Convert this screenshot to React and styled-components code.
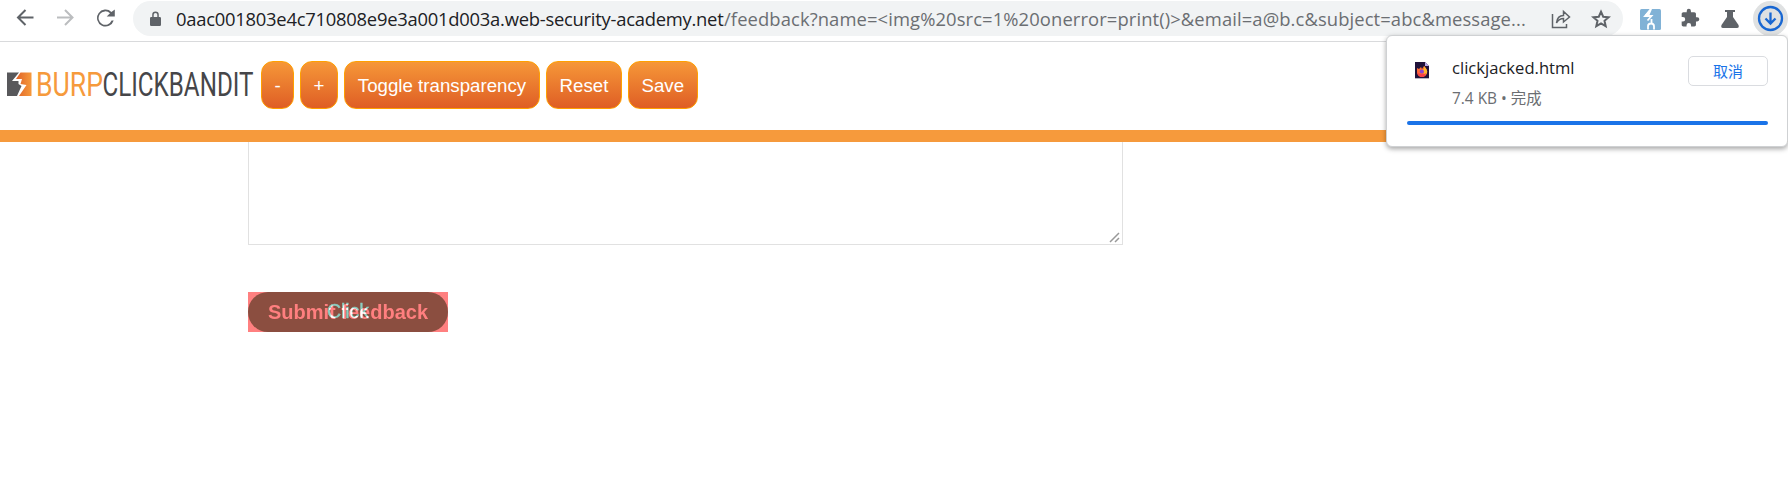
import React from "react";
import styled, { createGlobalStyle } from "styled-components";

const Global = createGlobalStyle`
  * { box-sizing: border-box; }
  body { margin: 0; background: #fff; overflow: hidden; font-family: "Liberation Sans", Arial, sans-serif; }
`;
const Page = styled.div`position: relative; width: 1788px; height: 485px; overflow: hidden;`;
const Toolbar = styled.header`
  display: flex; align-items: flex-start; height: 42px; padding-top: 1px;
  border-bottom: 1px solid #d9dadc; background: #fff;
`;
const Nav = styled.nav`display: flex; gap: 16px; padding: 5px 0 0 13px; width: 133px; flex: none;`;
const Icon = styled.svg`display: block; flex: none; width: ${p => p.$w || 24}px; height: ${p => p.$h || p.$w || 24}px;`;
const Address = styled.div`
  display: flex; align-items: center; flex: none; width: 1490px; height: 35px;
  border-radius: 18px; background: #f1f3f4; padding-left: 14px;
`;
const Url = styled.div`
  display: flex; flex: none; margin-left: 12px; width: 1373px; white-space: pre;
  font: 18.4px/33px "Open Sans", "Noto Sans", sans-serif;
`;
const Host = styled.span`flex: none; width: 548px; color: #202124; letter-spacing: -0.25px;`;
const Path = styled.span`color: #6b6e72; letter-spacing: 0.1px;`;
const AddressActions = styled.div`display: flex; gap: 16px; align-items: center;`;
const Extensions = styled.div`display: flex; align-items: center; gap: 16px; height: 35px; padding-left: 15px;`;
const DownloadCircle = styled.div`
  width: 35px; height: 35px; border-radius: 50%; background: #dfe1e2; margin-left: -5px;
  display: grid; place-items: center; flex: none;
`;
const BanditBar = styled.section`
  display: flex; align-items: flex-start; height: 100px; padding: 19px 0 0 7px;
  border-bottom: 12px solid #f69a3c; background: #fff;
`;
const Brand = styled.div`display: flex; align-items: center; width: 254px; height: 48px;`;
const LogoText = styled.text`font: 400 32.5px "Roboto", sans-serif;`;
const Buttons = styled.div`display: flex; gap: 6px;`;
const BanditButton = styled.button`
  width: ${p => p.$w}px; height: 48px; padding: 2px 0 0; border: 1px solid #ffa000; border-radius: 12px;
  background: linear-gradient(#f69738, #df5e25); color: #fff;
  font: 18.7px "Liberation Sans", Arial, sans-serif;
`;
const Content = styled.main`padding-left: 248px;`;
const Message = styled.div`
  width: 875px; height: 103px; border: 1px solid #e1e1e1; border-top: 0;
  display: flex; justify-content: flex-end; align-items: flex-end; padding: 0 2px 1px 0;
`;
const Submit = styled.div`
  position: relative; width: 200px; height: 40px; margin-top: 47px; background: #ff8080; isolation: isolate;
`;
const Pill = styled.div`
  height: 40px; border-radius: 20px; background: #8b4e40; color: #ff7f7f;
  font: bold 20px/40px "Liberation Sans", Arial, sans-serif; text-align: center;
`;
const ClickLabel = styled.span`
  position: absolute; inset: 0; color: #008080; mix-blend-mode: plus-lighter; text-align: center;
  font: 19.5px/39px "Liberation Sans", Arial, sans-serif; -webkit-text-stroke: 0.4px #008080;
`;
const Popup = styled.aside`
  position: absolute; left: 1386px; top: 35px; width: 402px; height: 112px; background: #fff;
  border: 1px solid #cfd1d3; border-radius: 6px; box-shadow: 0 2px 5px rgba(0,0,0,.35);
  padding: 20px 19px 0 20px;
`;
const FileRow = styled.div`display: flex; align-items: flex-start; height: 65px;`;
const FileIcon = styled.div`padding: 5px 0 0 7px; width: 21px;`;
const FileInfo = styled.div`flex: 1; padding-left: 24px; font-family: "Open Sans", "Noto Sans CJK SC", sans-serif;`;
const FileName = styled.div`font-size: 16.6px; line-height: 24px; color: #202124;`;
const FileMeta = styled.div`font-size: 15.4px; line-height: 22px; margin-top: 8px; color: #6b6e72;`;
const Cancel = styled.button`
  width: 80px; height: 30px; padding: 0; border: 1px solid #dadce0; border-radius: 5px; background: #fff;
  color: #1a73e8; font: 15px/26px "Noto Sans CJK SC", sans-serif;
`;
const Progress = styled.div`height: 4px; border-radius: 2px; background: #1a73e8;`;

const FoxFile = () => (
  <Icon $w={16} $h={19} viewBox="0 0 16 19">
    <path d="M1 1h10l4 4v12H1z" fill="#20123a" /><path d="M11 1l4 4h-4z" fill="#b9a6e8" />
    <path d="M3 7l2 1 2-2 1 2 2-3q4 4 3 7-1 4-5 4t-5-4z" fill="#ff6b35" />
    <path d="M10 5q4 4 3 7-2 3-4 2 2-3-1-5l2-1z" fill="#ffb52b" />
    <circle cx="7.8" cy="10.5" r="2.1" fill="#8b45d1" />
    <path d="M3 10q2 4 6 3 2 0 3-1-1 4-4 4-4 0-5-6" fill="#fa3e49" />
    <path d="M1 17.5h14" stroke="#b8b4c4" />
  </Icon>
);

export default function App() {
  return (
    <Page>
      <Global />
      <Toolbar>
        <Nav>
          <Icon viewBox="0 0 24 24" fill="none" stroke="#5f6368" strokeWidth="2"><path d="M20.5 11.5H5.5M12.5 4L5 11.5l7.5 7.5" /></Icon>
          <Icon viewBox="0 0 24 24" fill="none" stroke="#bbbdbf" strokeWidth="2"><path d="M4 11.5h15M12 4l7.5 7.5-7.5 7.5" /></Icon>
          <Icon viewBox="0 0 24 24"><path fill="#5f6368" d="M18.4 5.9A8.5 8.5 0 1 0 20.7 14.5h-2.15A6.7 6.7 0 1 1 17 7.3L13.7 10.6H21.8V3.5z" /></Icon>
        </Nav>
        <Address>
          <Icon $w={17} viewBox="0 0 17 17"><path fill="#5f6368" d="M5.2 7V4.8a3.3 3.3 0 0 1 6.6 0V7h1q1.2 0 1.200 1.2v6.6q0 1.2-1.2 1.2H4.2Q3 16 3 14.8V8.2Q3 7 4.2 7zM6.7 7h3.6V4.8a1.8 1.8 0 0 0-3.6 0z" /></Icon>
          <Url>
            <Host>0aac001803e4c710808e9e3a001d003a.web-security-academy.net</Host>
            <Path>{"/feedback?name=<img%20src=1%20onerror=print()>&email=a@b.c&subject=abc&message..."}</Path>
          </Url>
          <AddressActions>
            <Icon viewBox="0 0 24 24" fill="none" stroke="#5f6368" strokeWidth="1.5"><path d="M3.5 7v13.5h14V17M7.5 16c.5-5 3-7.5 7-7.5V4.5l6 5.5-6 5v-3.5q-4.5 0-7 4.5z" /></Icon>
            <Icon viewBox="0 0 24 24" fill="none" stroke="#5f6368" strokeWidth="2"><path d="M12 4.7l2.2 5 5.4.5-4.1 3.6 1.2 5.3-4.7-2.8-4.7 2.8 1.2-5.3-4.1-3.6 5.4-.5z" /></Icon>
          </AddressActions>
        </Address>
        <Extensions>
          <Icon viewBox="0 0 24 24">
            <rect x="2" y="2" width="21" height="21" rx="1.5" fill="#81b2d6" />
            <path d="M12.5 2.5L7 9h6.5L9.5 13.5M13.5 12v4M10 22.5v-3.2q0-2.800 3-2.800t3 2.800v3.200" fill="none" stroke="#fff" strokeWidth="1.8" />
            <path d="M12 2h2l-2.500 6H7z" fill="#fff" />
          </Icon>
          <Icon viewBox="0 0 24 24" fill="#5f6368"><path transform="translate(2 1) scale(.84)" d="M20.5 11H19V7c0-1.1-.9-2-2-2h-4V3.500a2.500 2.500 0 0 0-5 0V5H4c-1.100 0-2 .9-2 2v3.800h1.500a2.700 2.700 0 0 1 0 5.400H2V20c0 1.100.9 2 2 2h3.800v-1.500a2.700 2.700 0 0 1 5.400 0V22H17c1.100 0 2-.9 2-2v-4h1.500a2.500 2.500 0 0 0 0-5z" /></Icon>
          <Icon viewBox="0 0 24 24" fill="#5f6368"><path d="M7 3h10v2h-2v5l5.500 8q1 3-1.500 3H5q-2.500 0-1.500-3L9 10V5H7z" /></Icon>
          <DownloadCircle><Icon $w={27} viewBox="0 0 27 27" fill="none" stroke="#1967d2" strokeWidth="2.3"><circle cx="13.5" cy="13.5" r="11.5" /><path d="M13.5 7.5v11M8.5 13.5l5 5 5-5" /></Icon></DownloadCircle>
        </Extensions>
      </Toolbar>
      <BanditBar>
        <Brand>
          <Icon $w={250} $h={40} viewBox="0 0 250 40">
            <defs><linearGradient id="spark"><stop stopColor="#df6228" /><stop offset="1" stopColor="#f69a3c" /></linearGradient></defs>
            <path d="M0 7.5h12L5 16h6.500v3l3 2L10 31H0z" fill="#58585b" />
            <path d="M13.5 7.5H24.5V31H12l7.500-11-6-1 1.500-5H9z" fill="url(#spark)" />
            <LogoText transform="translate(29 31) scale(.82 1)" fill="#f69a3c">BURP</LogoText>
            <LogoText transform="translate(95.5 31) scale(.745 1)" fill="#464649">CLICKBANDIT</LogoText>
          </Icon>
        </Brand>
        <Buttons>
          <BanditButton $w={33}>-</BanditButton><BanditButton $w={38}>+</BanditButton>
          <BanditButton $w={196}>Toggle transparency</BanditButton><BanditButton $w={76}>Reset</BanditButton><BanditButton $w={69.5}>Save</BanditButton>
        </Buttons>
      </BanditBar>
      <Content>
        <Message><Icon $w={11} viewBox="0 0 11 11" fill="none" stroke="#999" strokeWidth="1.5"><path d="M1 10l9-9M6 10l4-4" /></Icon></Message>
        <Submit>
          <Pill>Submit feedback</Pill>
          <ClickLabel>Click</ClickLabel>
        </Submit>
      </Content>
      <Popup>
        <FileRow>
          <FileIcon><FoxFile /></FileIcon>
          <FileInfo><FileName>clickjacked.html</FileName><FileMeta>7.4 KB • 完成</FileMeta></FileInfo>
          <Cancel>取消</Cancel>
        </FileRow>
        <Progress />
      </Popup>
    </Page>
  );
}
